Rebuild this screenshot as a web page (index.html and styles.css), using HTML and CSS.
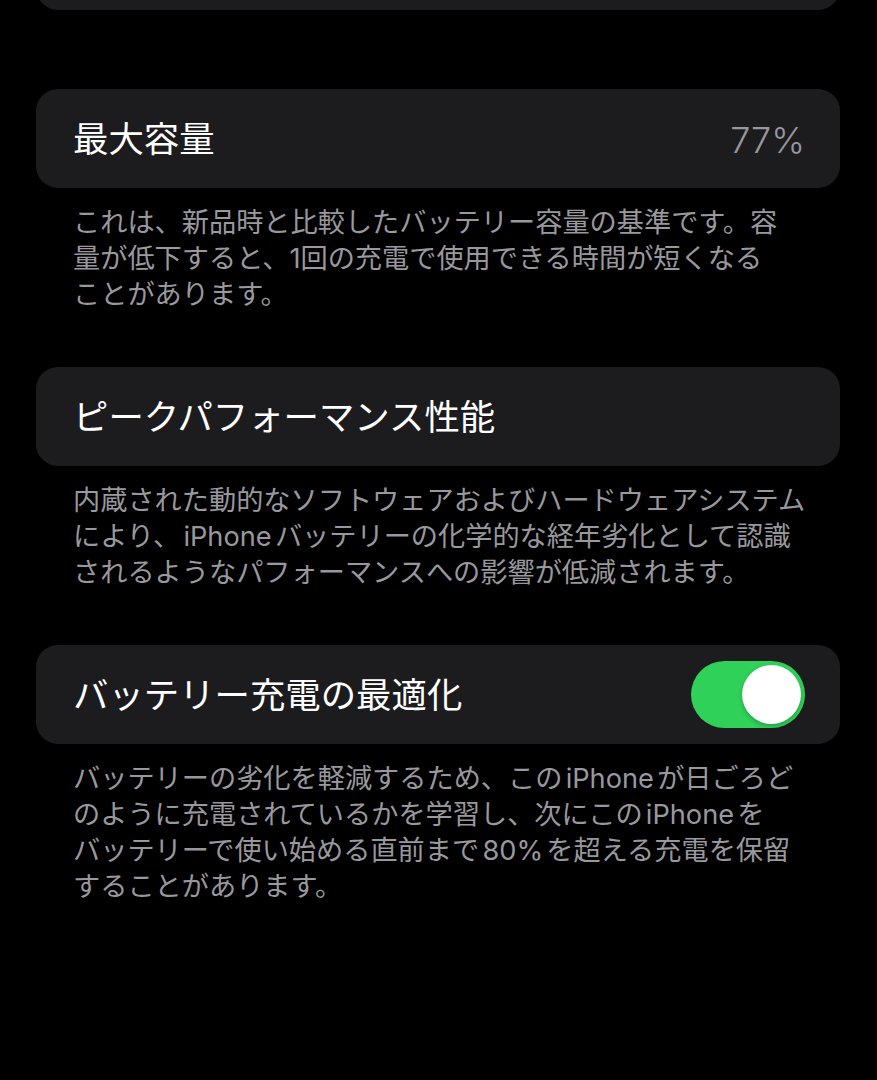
FILE: index.html
```html
<!DOCTYPE html>
<html lang="ja">
<head>
<meta charset="utf-8">
<title>バッテリーの状態と充電</title>
<link rel="stylesheet" href="styles.css">
</head>
<body>
<main class="settings">
  <section class="group group-top">
    <div class="cell"></div>
  </section>

  <section class="group">
    <div class="cell">
      <span class="cell-title">最大容量</span>
      <span class="cell-value">77%</span>
    </div>
    <p class="group-footer">これは、新品時と比較したバッテリー容量の基準です。容<br>量が低下すると、1回の充電で使用できる時間が短くなる<br>ことがあります。</p>
  </section>

  <section class="group">
    <div class="cell">
      <span class="cell-title">ピークパフォーマンス性能</span>
    </div>
    <p class="group-footer">内蔵された動的なソフトウェアおよびハードウェアシステム<br>により、<span class="latin">iPhone</span>バッテリーの化学的な経年劣化として認識<br>されるようなパフォーマンスへの影響が低減されます。</p>
  </section>

  <section class="group">
    <div class="cell">
      <span class="cell-title">バッテリー充電の最適化</span>
      <span class="switch is-on" role="switch" aria-checked="true"><span class="switch-knob"></span></span>
    </div>
    <p class="group-footer">バッテリーの劣化を軽減するため、この<span class="latin">iPhone</span>が日ごろど<br>のように充電されているかを学習し、次にこの<span class="latin">iPhone</span>を<br>バッテリーで使い始める直前まで<span class="latin">80%</span>を超える充電を保留<br>することがあります。</p>
  </section>
</main>
</body>
</html>
```

FILE: styles.css
```css
html, body {
  margin: 0;
  padding: 0;
  background: #000;
}

body {
  font-family: "Inter", "Noto Sans CJK JP", sans-serif;
  color: #fff;
  -webkit-font-smoothing: antialiased;
}

.settings {
  display: flex;
  flex-direction: column;
  padding: 0 37px 0 36px;
  overflow: hidden;
  height: 1080px;
  box-sizing: border-box;
}

.group {
  display: flex;
  flex-direction: column;
  margin-bottom: 54px;
}

.group-top {
  margin-top: -90px;
  margin-bottom: 79px;
}

.cell {
  display: flex;
  align-items: center;
  justify-content: space-between;
  height: 99px;
  box-sizing: border-box;
  padding: 0 35px 0 37px;
  background: #1c1c1e;
  border-radius: 22px;
}

.group-top .cell {
  height: 100px;
}

.cell-title {
  font-size: 35.4px;
  line-height: 1;
  color: #fff;
  padding-top: 3px;
}

.cell-value {
  font-size: 36px;
  font-weight: 300;
  color: #98989e;
  padding-top: 3px;
}

.group-footer {
  margin: 0;
  padding: 17px 0 0 37px;
  font-size: 27.2px;
  line-height: 36px;
  color: #98989e;
  white-space: nowrap;
}

/* Latin runs inside Japanese text get a little breathing room */
.latin {
  margin: 0 0.12em;
}

/* toggle switch */
.switch {
  position: relative;
  display: block;
  width: 114px;
  height: 67px;
  border-radius: 34px;
  background: #3c3c40;
  box-sizing: border-box;
}

.switch.is-on {
  background: #30d158;
}

.switch-knob {
  position: absolute;
  top: 4px;
  right: 4px;
  width: 59px;
  height: 59px;
  border-radius: 50%;
  background: #fff;
  box-shadow: 0 2px 4px rgba(0, 0, 0, 0.25);
}
```
